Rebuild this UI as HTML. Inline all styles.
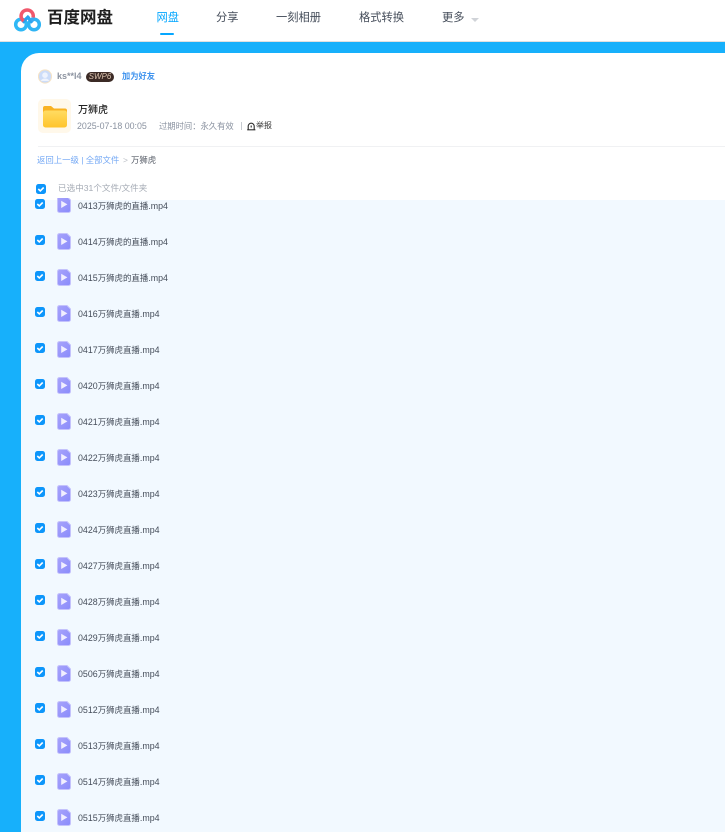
<!DOCTYPE html>
<html lang="zh"><head><meta charset="utf-8">
<style>
*{margin:0;padding:0;box-sizing:border-box}
html,body{width:725px;height:832px;overflow:hidden;background:#fff}
body{position:relative;font-family:"Liberation Sans","Noto Sans CJK SC",sans-serif;color:#333}
.a{position:absolute;white-space:nowrap;line-height:1}
.nav{font-size:11.25px;color:#454d5a;top:13px}
.cb{position:absolute;left:35px;width:10px;height:10px}
.ic{position:absolute;left:57px;width:14px;height:17px}
.n{position:absolute;left:78px;font-size:8.85px;line-height:12px;color:#454d5a;white-space:nowrap}
.n i{font-style:normal;font-size:8.45px}
</style></head><body>
<div style="position:absolute;left:0;top:0;width:725px;height:42px;background:#fff;border-bottom:1px solid #e0e0e0"></div>
<svg class="a" style="left:13px;top:7px" width="29" height="26" viewBox="0 0 29 26" fill="none">
<circle cx="8" cy="17.500" r="5.300" stroke="#2fb8f6" stroke-width="3.500"/>
<circle cx="21" cy="17.500" r="5.300" stroke="#2fb4f4" stroke-width="3.500"/>
<path d="M9.400 15.500L16 9" stroke="#2a9fec" stroke-width="3.200"/>
<path d="M19.600 15.500L14 9.600" stroke="#2aa4ee" stroke-width="3.200"/>
<path d="M10.600 14 A6.100 6.100 0 1 1 20.100 10.500" stroke="#f0586c" stroke-width="3.500"/>
<path d="M20.100 10.500 A6.100 6.100 0 0 1 18.600 14" stroke="#3aa8f0" stroke-width="3.500"/>
</svg>
<div class="a" style="left:47px;top:10px;font-size:16.500px;font-weight:700;color:#1f1f1f">百度网盘</div>
<div class="a nav" style="left:156.500px;color:#06a7ff">网盘</div>
<div style="position:absolute;left:160px;top:33px;width:14px;height:2px;background:#06a7ff;border-radius:1px"></div>
<div class="a nav" style="left:216px">分享</div>
<div class="a nav" style="left:276px">一刻相册</div>
<div class="a nav" style="left:359px">格式转换</div>
<div class="a nav" style="left:442px">更多</div>
<div style="position:absolute;left:471px;top:17.500px;border:4px solid transparent;border-top:4.500px solid #d0d3d8;border-bottom:0"></div>

<div style="position:absolute;left:0;top:42px;width:725px;height:790px;background:#17b0fb"></div>
<div style="position:absolute;left:21px;top:53px;width:704px;height:779px;background:#fff;border-top-left-radius:18px"></div>
<div style="position:absolute;left:21px;top:200px;width:704px;height:632px;background:#f2f9ff"></div>

<svg class="a" style="left:38px;top:69px" width="14" height="15" viewBox="0 0 14 15">
<circle cx="7" cy="7.500" r="6.600" fill="#ccdcf8" stroke="#f6e3c5" stroke-width="1"/>
<circle cx="7" cy="6.200" r="2.800" fill="#eef3fd"/><path d="M2.800 12a4.400 3.600 0 0 1 8.400 0z" fill="#eef3fd"/>
</svg>
<div class="a" style="left:57px;top:71.500px;font-size:9px;font-weight:700;color:#8c93a0">ks**l4</div>
<div class="a" style="left:86px;top:72px;width:28px;height:10px;border-radius:5px;background:#3b2a25;color:#dcc4b0;font-size:8px;line-height:10px;text-align:center;font-style:italic">SWP6</div>
<div class="a" style="left:122px;top:72.500px;font-size:8.250px;font-weight:700;color:#3f93ee">加为好友</div>

<div style="position:absolute;left:38px;top:99px;width:33px;height:34px;background:#fff8ea;border-radius:5px"></div>
<svg class="a" style="left:43px;top:105px" width="24" height="23" viewBox="0 0 24 23">
<defs><linearGradient id="fo" x1="0" y1="0" x2="0" y2="1"><stop offset="0" stop-color="#ffdc62"/><stop offset="1" stop-color="#ffc42c"/></linearGradient></defs>
<path d="M0 3a2 2 0 0 1 2-2h6l3 2.500h11a2 2 0 0 1 2 2v4H0z" fill="#f9b222"/>
<rect x="0" y="5.500" width="24" height="17" rx="2.500" fill="url(#fo)"/>
</svg>
<div class="a" style="left:78px;top:105.500px;font-size:10px;font-weight:500;color:#222">万狮虎</div>
<div class="a" style="left:77px;top:121.500px;font-size:8.850px;color:#8a92a0">2025-07-18 00:05</div>
<div class="a" style="left:159px;top:122px;font-size:8.300px;color:#8a92a0">过期时间：永久有效</div>
<div style="position:absolute;left:241px;top:122px;width:1px;height:8px;background:#c6cad0"></div>
<svg class="a" style="left:247px;top:121.500px" width="9" height="9" viewBox="0 0 9 9" fill="none" stroke="#2a2a2a" stroke-width="1.100">
<path d="M1.200 7.500V4.200a3 3 0 0 1 6 0v3.300"/><path d="M.2 7.800h8.200"/><path d="M4.200 3.500v2"/>
</svg>
<div class="a" style="left:256px;top:122px;font-size:8px;color:#333">举报</div>
<div style="position:absolute;left:38px;top:146px;width:687px;height:1px;background:#f0f1f3"></div>

<div class="a" style="left:37px;top:156px;font-size:8.400px;color:#75a9f5">返回上一级 | 全部文件</div>
<div class="a" style="left:123px;top:156px;font-size:8.400px;color:#b9bdc4">&gt;</div>
<div class="a" style="left:131px;top:156px;font-size:8.400px;color:#555b66">万狮虎</div>

<svg class="cb" style="left:36px;top:184px"><use href="#cbx" width="10" height="10"/></svg>
<div class="a" style="left:58px;top:183.500px;font-size:8.600px;color:#a5abb5">已选中31个文件/文件夹</div>

<svg width="0" height="0" style="position:absolute"><defs>
<linearGradient id="g" x1="0" y1="0" x2="1" y2="1"><stop offset="0" stop-color="#a7a3fb"/><stop offset="1" stop-color="#8a8bfb"/></linearGradient>
<symbol id="cbx" viewBox="0 0 10 10"><rect width="10" height="10" rx="2.500" fill="#0d96fb"/><path d="M2.300 5l2 1.900 3.400-3.400" fill="none" stroke="#fff" stroke-width="1.600"/></symbol>
<symbol id="vid" viewBox="0 0 14 17"><path d="M2.500 .5h7.500l3.500 3.500v10.500a2 2 0 0 1-2 2H2.500a2 2 0 0 1-2-2V2.500a2 2 0 0 1 2-2z" fill="url(#g)" stroke="#c4c2fc" stroke-width="1"/><path d="M4.200 4.800l6.200 3.600-6.200 3.600z" fill="#f1efff"/></symbol>
</defs></svg>

<svg style="position:absolute;left:57px;top:198px" width="14" height="15"><use href="#vid" width="14" height="17" y="-2"/></svg>
<svg class="cb" style="top:199px"><use href="#cbx" width="10" height="10"/></svg>
<div class="n" style="top:200px">0413<i>万狮虎的直播</i>.mp4</div>

<svg class="cb" style="top:235px"><use href="#cbx" width="10" height="10"/></svg>
<svg class="ic" style="top:233px"><use href="#vid" width="14" height="17"/></svg>
<div class="n" style="top:236px">0414<i>万狮虎的直播</i>.mp4</div>

<svg class="cb" style="top:271px"><use href="#cbx" width="10" height="10"/></svg>
<svg class="ic" style="top:269px"><use href="#vid" width="14" height="17"/></svg>
<div class="n" style="top:272px">0415<i>万狮虎的直播</i>.mp4</div>

<svg class="cb" style="top:307px"><use href="#cbx" width="10" height="10"/></svg>
<svg class="ic" style="top:305px"><use href="#vid" width="14" height="17"/></svg>
<div class="n" style="top:308px">0416<i>万狮虎直播</i>.mp4</div>

<svg class="cb" style="top:343px"><use href="#cbx" width="10" height="10"/></svg>
<svg class="ic" style="top:341px"><use href="#vid" width="14" height="17"/></svg>
<div class="n" style="top:344px">0417<i>万狮虎直播</i>.mp4</div>

<svg class="cb" style="top:379px"><use href="#cbx" width="10" height="10"/></svg>
<svg class="ic" style="top:377px"><use href="#vid" width="14" height="17"/></svg>
<div class="n" style="top:380px">0420<i>万狮虎直播</i>.mp4</div>

<svg class="cb" style="top:415px"><use href="#cbx" width="10" height="10"/></svg>
<svg class="ic" style="top:413px"><use href="#vid" width="14" height="17"/></svg>
<div class="n" style="top:416px">0421<i>万狮虎直播</i>.mp4</div>

<svg class="cb" style="top:451px"><use href="#cbx" width="10" height="10"/></svg>
<svg class="ic" style="top:449px"><use href="#vid" width="14" height="17"/></svg>
<div class="n" style="top:452px">0422<i>万狮虎直播</i>.mp4</div>

<svg class="cb" style="top:487px"><use href="#cbx" width="10" height="10"/></svg>
<svg class="ic" style="top:485px"><use href="#vid" width="14" height="17"/></svg>
<div class="n" style="top:488px">0423<i>万狮虎直播</i>.mp4</div>

<svg class="cb" style="top:523px"><use href="#cbx" width="10" height="10"/></svg>
<svg class="ic" style="top:521px"><use href="#vid" width="14" height="17"/></svg>
<div class="n" style="top:524px">0424<i>万狮虎直播</i>.mp4</div>

<svg class="cb" style="top:559px"><use href="#cbx" width="10" height="10"/></svg>
<svg class="ic" style="top:557px"><use href="#vid" width="14" height="17"/></svg>
<div class="n" style="top:560px">0427<i>万狮虎直播</i>.mp4</div>

<svg class="cb" style="top:595px"><use href="#cbx" width="10" height="10"/></svg>
<svg class="ic" style="top:593px"><use href="#vid" width="14" height="17"/></svg>
<div class="n" style="top:596px">0428<i>万狮虎直播</i>.mp4</div>

<svg class="cb" style="top:631px"><use href="#cbx" width="10" height="10"/></svg>
<svg class="ic" style="top:629px"><use href="#vid" width="14" height="17"/></svg>
<div class="n" style="top:632px">0429<i>万狮虎直播</i>.mp4</div>

<svg class="cb" style="top:667px"><use href="#cbx" width="10" height="10"/></svg>
<svg class="ic" style="top:665px"><use href="#vid" width="14" height="17"/></svg>
<div class="n" style="top:668px">0506<i>万狮虎直播</i>.mp4</div>

<svg class="cb" style="top:703px"><use href="#cbx" width="10" height="10"/></svg>
<svg class="ic" style="top:701px"><use href="#vid" width="14" height="17"/></svg>
<div class="n" style="top:704px">0512<i>万狮虎直播</i>.mp4</div>

<svg class="cb" style="top:739px"><use href="#cbx" width="10" height="10"/></svg>
<svg class="ic" style="top:737px"><use href="#vid" width="14" height="17"/></svg>
<div class="n" style="top:740px">0513<i>万狮虎直播</i>.mp4</div>

<svg class="cb" style="top:775px"><use href="#cbx" width="10" height="10"/></svg>
<svg class="ic" style="top:773px"><use href="#vid" width="14" height="17"/></svg>
<div class="n" style="top:776px">0514<i>万狮虎直播</i>.mp4</div>

<svg class="cb" style="top:811px"><use href="#cbx" width="10" height="10"/></svg>
<svg class="ic" style="top:809px"><use href="#vid" width="14" height="17"/></svg>
<div class="n" style="top:812px">0515<i>万狮虎直播</i>.mp4</div>
</body></html>
